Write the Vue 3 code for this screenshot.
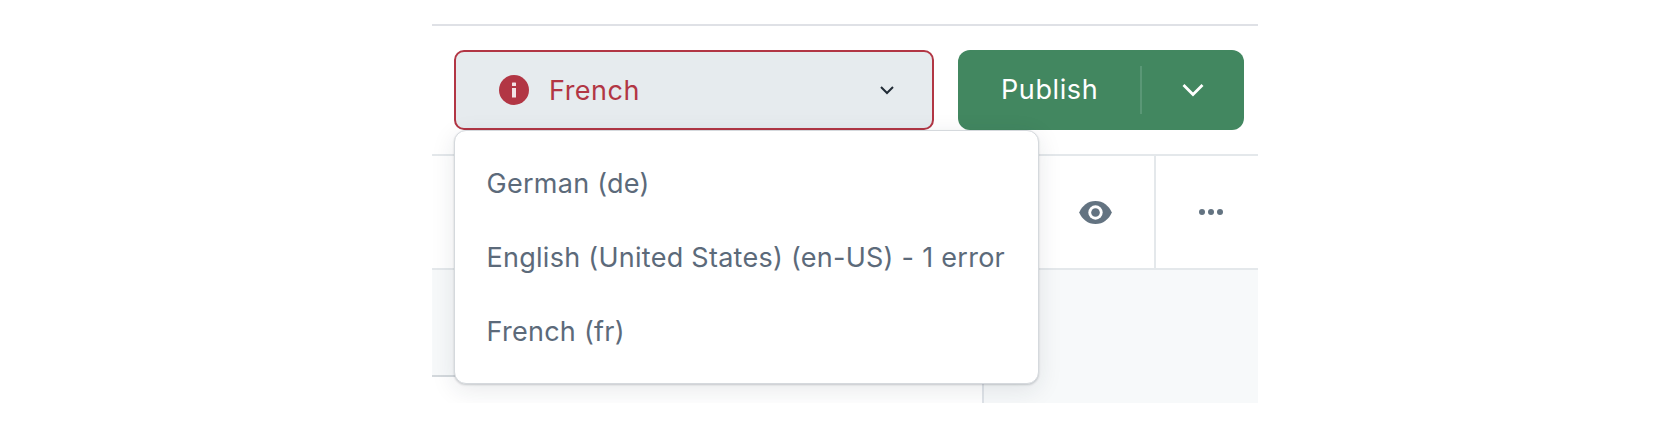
<script setup>
const languages = ['German (de)', 'English (United States) (en-US) - 1 error', 'French (fr)']
</script>

<template>
  <div class="frame">
    <div class="toolbar">
      <button class="locale-select">
        <span class="locale-label">
          <svg class="info-icon" viewBox="0 0 30 30" width="30" height="30">
            <circle cx="15" cy="15" r="15" fill="#b23644" />
            <rect x="13" y="7.5" width="4" height="3.6" rx="0.6" fill="#f2e3e5" />
            <rect x="13" y="13" width="4" height="9.5" fill="#f2e3e5" />
          </svg>
          French
        </span>
        <svg class="caret" viewBox="0 0 16 10" width="16" height="10">
          <path d="M2 2l6 6 6-6" fill="none" stroke="#212b36" stroke-width="2" />
        </svg>
      </button>
      <div class="publish">
        <span class="publish-label">Publish</span>
        <span class="publish-toggle">
          <svg viewBox="0 0 22 14" width="22" height="14">
            <path d="M1.5 2l9.5 9.5L20.5 2" fill="none" stroke="#fff" stroke-width="2.8" />
          </svg>
        </span>
      </div>
    </div>
    <div class="actions">
      <div class="action-cell eye-cell">
        <svg viewBox="0 0 34 24" width="33" height="23">
          <path d="M0 12C3 5 9 0 17 0s14 5 17 12c-3 7-9 12-17 12S3 19 0 12z" fill="#637381" />
          <circle cx="17" cy="12" r="7.5" fill="#fff" />
          <circle cx="17" cy="12" r="4.5" fill="#637381" />
        </svg>
      </div>
      <div class="action-cell more-cell">
        <svg viewBox="0 0 24 6" width="24" height="6">
          <circle cx="3" cy="3" r="3" fill="#637381" />
          <circle cx="12" cy="3" r="3" fill="#637381" />
          <circle cx="21" cy="3" r="3" fill="#637381" />
        </svg>
      </div>
    </div>
    <div class="content">
      <div class="content-main">
        <div class="content-strip"></div>
      </div>
      <div class="content-side"></div>
    </div>
    <ul class="menu">
      <li v-for="lang in languages" :key="lang" class="menu-item">{{ lang }}</li>
    </ul>
  </div>
</template>

<style scoped>
.frame {
  position: relative;
  box-sizing: border-box;
  width: 826px;
  height: 403px;
  margin-left: 432px;
  padding-top: 24px;
  font-family: Inter, "Liberation Sans", sans-serif;
}

.toolbar {
  display: flex;
  gap: 24px;
  height: 132px;
  box-sizing: border-box;
  padding: 24px 14px 0 22px;
  border-top: 2px solid #dfe1e6;
  border-bottom: 2px solid #e4e8eb;
}

.locale-select {
  display: flex;
  align-items: center;
  justify-content: space-between;
  width: 480px;
  height: 80px;
  box-sizing: border-box;
  padding: 0 37px 0 43px;
  background: #e6ebee;
  border: 2px solid #b23644;
  border-radius: 10px;
  font: inherit;
}

.locale-label {
  display: flex;
  align-items: center;
  gap: 20px;
  font-size: 27px;
  letter-spacing: 0.5px;
  color: #b23644;
}

.publish {
  display: flex;
  align-items: center;
  width: 286px;
  height: 80px;
  background: #428760;
  border-radius: 12px;
  color: #fff;
  font-size: 27px;
  letter-spacing: 0.6px;
}

.publish-label {
  box-sizing: border-box;
  width: 184px;
  padding-left: 43px;
  height: 48px;
  line-height: 48px;
  border-right: 2px solid #5a9776;
}

.publish-toggle {
  flex: 1;
  display: flex;
  justify-content: center;
}

.actions {
  display: flex;
  justify-content: flex-end;
  height: 114px;
  box-sizing: border-box;
  border-bottom: 2px solid #e4e8eb;
}

.action-cell {
  display: flex;
  align-items: center;
  justify-content: center;
}

.eye-cell {
  width: 118px;
}

.more-cell {
  box-sizing: border-box;
  width: 104px;
  padding-left: 8px;
  border-left: 2px solid #e4e8eb;
}

.content {
  display: flex;
  height: 133px;
}

.content-main {
  box-sizing: border-box;
  width: 552px;
  border-right: 2px solid #dfe3e8;
}

.content-strip {
  box-sizing: border-box;
  height: 107px;
  background: #f7f9fa;
  border-bottom: 2px solid #d3d8dc;
}

.content-side {
  flex: 1;
  background: #f7f9fa;
}

.menu {
  position: absolute;
  top: 130px;
  left: 22px;
  width: 585px;
  height: 254px;
  box-sizing: border-box;
  margin: 0;
  padding: 15.5px 0 0;
  list-style: none;
  background: #fff;
  border: 1.5px solid #d5d9dd;
  border-radius: 12px;
  box-shadow: 0 1px 2px rgba(33, 43, 54, 0.2), 0 6px 24px rgba(33, 43, 54, 0.1);
}

.menu-item {
  height: 74px;
  line-height: 74px;
  padding-left: 31.5px;
  font-size: 27px;
  letter-spacing: 0.27px;
  color: #5c6a7a;
  white-space: nowrap;
}
</style>
